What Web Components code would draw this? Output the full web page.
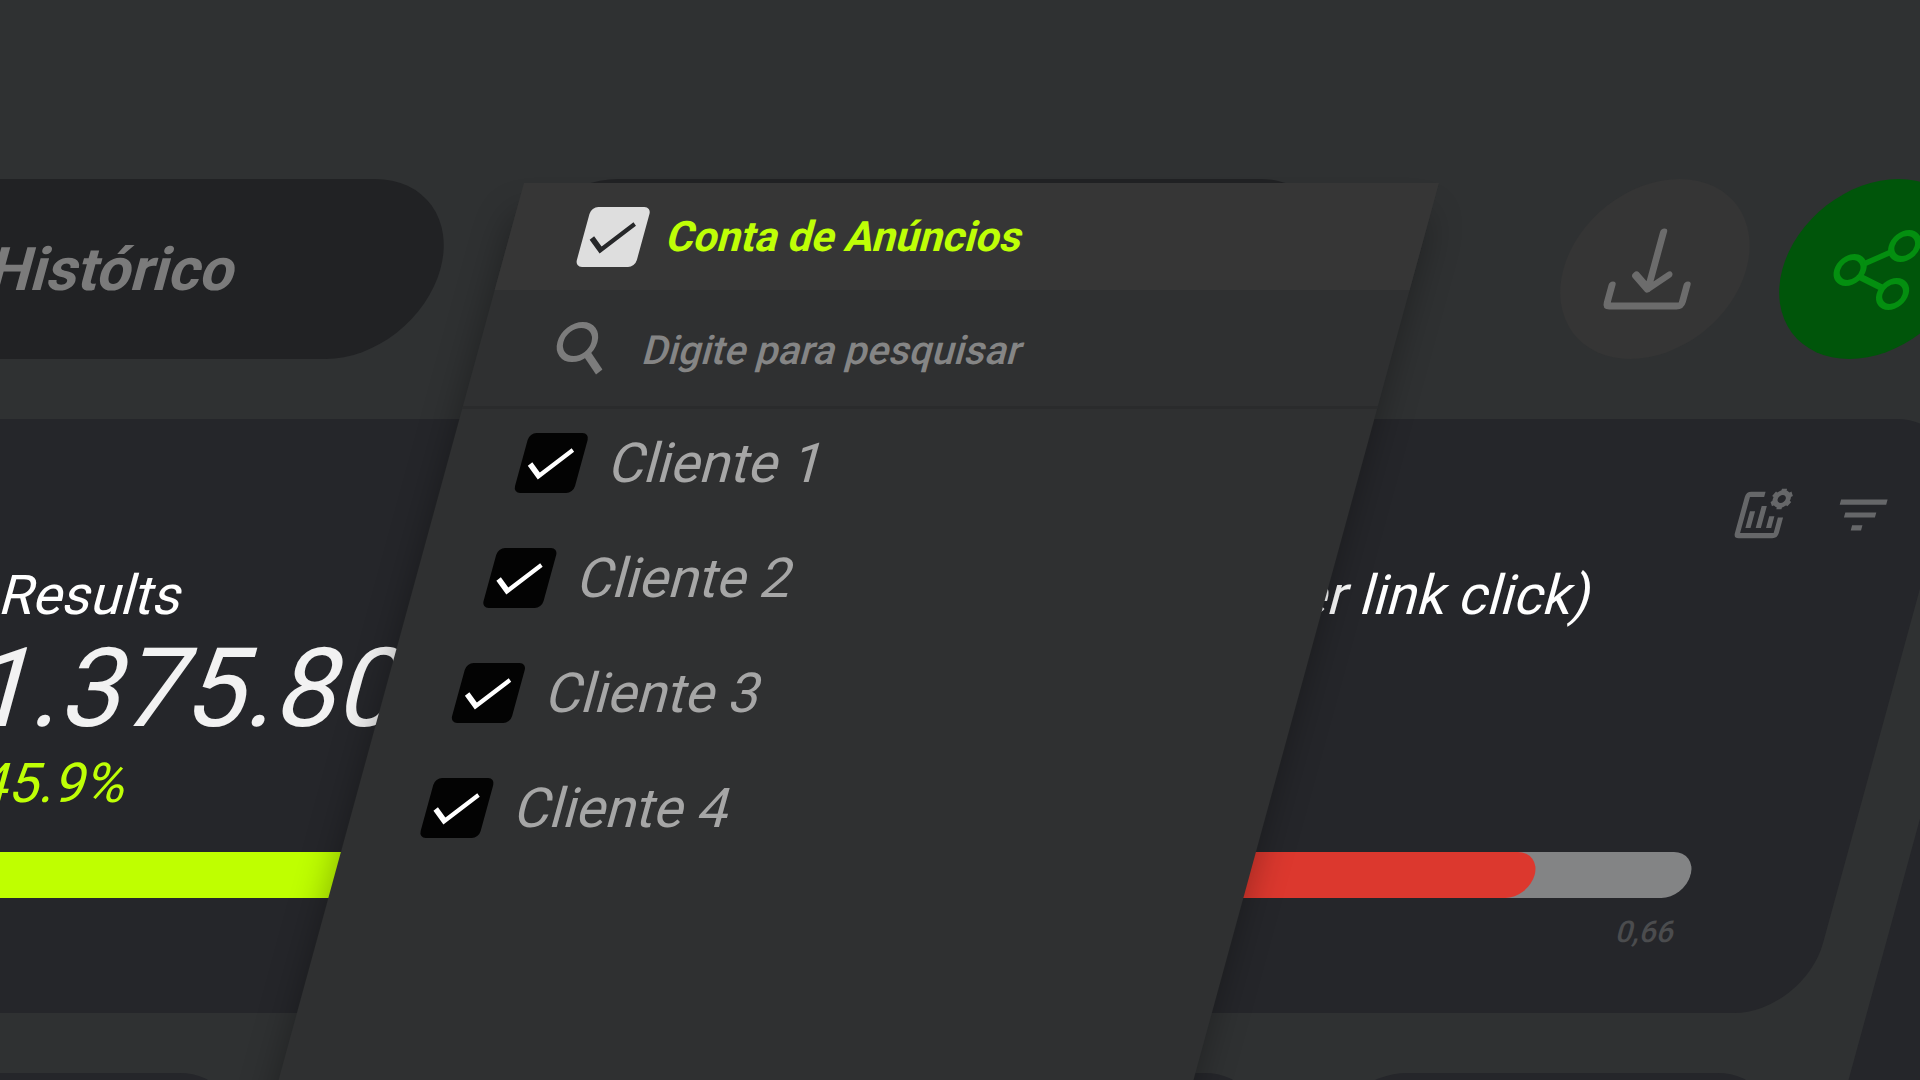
<!DOCTYPE html>
<html lang="pt-BR">
<head>
<meta charset="utf-8">
<title>Conta de Anúncios</title>
<style>
  html, body {
    margin: 0;
    height: 100%;
    overflow: hidden;
    background: #2f3132;
  }
</style>
</head>
<body>

<ads-stage>
  <report-toolbar slot="toolbar">
    <pill-button slot="history">Histórico</pill-button>
    <account-picker slot="account">
      <check-item slot="title" tone="light">Conta de Anúncios</check-item>
      <check-item>Cliente 1</check-item>
      <check-item>Cliente 2</check-item>
      <check-item>Cliente 3</check-item>
      <check-item>Cliente 4</check-item>
    </account-picker>
    <round-button slot="actions" label="Baixar">
      <svg viewBox="0 0 90 90" fill="none" stroke="currentColor" stroke-width="7" stroke-linecap="round" stroke-linejoin="round">
        <path d="M43 8V65M27 51L43 65L60 51"/>
        <path d="M6 61V78Q6 82 10 82H77Q81 82 81 78V61"/>
      </svg>
    </round-button>
    <round-button slot="actions" label="Compartilhar" tone="green">
      <svg viewBox="0 0 90 90" fill="none" stroke="currentColor" stroke-width="6">
        <circle cx="21" cy="46" r="13"/>
        <circle cx="69" cy="22" r="13"/>
        <circle cx="70" cy="70" r="13"/>
        <path d="M33 40L57 28M33 53L58 64"/>
      </svg>
    </round-button>
  </report-toolbar>

  <report-card>
    <metric-block value="1000">
      <span slot="name">Results</span>
      <span slot="total">1.375.80</span>
      <span slot="change">45.9%</span>
    </metric-block>
    <metric-block value="796" tone="red">
      <span slot="name">CPC (Cost per link click)</span>
      <span slot="limit">0,66</span>
    </metric-block>
  </report-card>
</ads-stage>

<script>
/* Base class: clones a style + markup string into an open shadow root. */
class BaseElement extends HTMLElement {
  constructor() {
    super();
    this.attachShadow({ mode: 'open' });
  }

  connectedCallback() {
    this.shadowRoot.innerHTML = this.template();
  }
}

/* Slanted canvas. Wider than the window so that the skew never bares an edge. */
class AdsStage extends BaseElement {
  template() {
    return `
      <style>
        :host {
          display: block;
          height: 100vh;
          overflow: hidden;
          font-family: Roboto, "Liberation Sans", sans-serif;
          color: #fff;
        }
        .plane {
          box-sizing: border-box;
          display: flex;
          flex-direction: column;
          gap: 60px;
          width: calc(100vw + 296px);
          padding-top: 179px;
          transform: skewX(-15.3deg);
          transform-origin: 0 0;
        }
        .board {
          display: grid;
          grid-template-columns: minmax(0, 1fr) 72px;
          gap: 63px;
        }
        .main {
          display: grid;
          gap: 60px;
        }
        .row {
          display: grid;
          grid-template-columns: 544fr 450fr 450fr 450fr;
          gap: 63px;
        }
        .tile {
          height: 300px;
          border-radius: 70px;
          background: #25262a;
        }
        .side {
          border-radius: 70px 0 0 70px;
          background: #25262a;
        }
      </style>
      <div class="plane">
        <slot name="toolbar"></slot>
        <div class="board">
          <div class="main">
            <slot></slot>
            <div class="row">
              <div class="tile"></div>
              <div class="tile"></div>
              <div class="tile"></div>
              <div class="tile"></div>
            </div>
          </div>
          <div class="side"></div>
        </div>
      </div>
    `;
  }
}

class ReportToolbar extends BaseElement {
  template() {
    return `
      <style>
        :host {
          position: relative;
          z-index: 1;
          display: flex;
          gap: 63px;
          height: 180px;
          margin-left: -130px;
          padding-right: 177px;
        }
        .history { flex: 644 1 0; display: grid; }
        .account { flex: 822 1 0; display: grid; }
        .actions {
          flex: 577 1 0;
          display: flex;
          justify-content: flex-end;
          gap: 36px;
        }
      </style>
      <div class="history"><slot name="history"></slot></div>
      <div class="account"><slot name="account"></slot></div>
      <div class="actions"><slot name="actions"></slot></div>
    `;
  }
}

class PillButton extends BaseElement {
  template() {
    return `
      <style>
        :host { display: grid; }
        button {
          padding: 0 8px 0 0;
          border: 0;
          border-radius: 90px;
          background: #212224;
          color: #7b7b7b;
          font: 700 60px Roboto, sans-serif;
        }
      </style>
      <button type="button"><slot></slot></button>
    `;
  }
}

class RoundButton extends BaseElement {
  template() {
    return `
      <style>
        :host { display: grid; width: 183px; }
        button {
          display: grid;
          place-items: center;
          padding: 0;
          border: 0;
          border-radius: 50%;
          background: #353535;
          color: #6c6c6c;
        }
        :host([tone="green"]) button { background: #00550a; color: #048f10; }
        ::slotted(svg) { width: 90px; height: 90px; }
      </style>
      <button type="button" aria-label="${this.getAttribute('label')}"><slot></slot></button>
    `;
  }
}

/* Pill with its drop-down panel lying open over the board. */
class AccountPicker extends BaseElement {
  template() {
    return `
      <style>
        :host {
          position: relative;
          display: block;
          border-radius: 90px;
          background: #212224;
        }
        .panel {
          position: absolute;
          top: 4px;
          left: -3px;
          width: calc(100% + 93px);
          height: 1100px;
          background: #2f3031;
          box-shadow: 0 32px 36px rgba(0, 0, 0, 0.32);
        }
        header {
          display: flex;
          align-items: center;
          height: 107px;
          padding-left: 74px;
          background: #363636;
        }
        .search {
          display: flex;
          align-items: center;
          gap: 36px;
          height: 116px;
          padding-left: 76px;
          border-bottom: 3px solid #2a2b2c;
          color: #7c7c7c;
        }
        .search svg { width: 54px; height: 54px; }
        input {
          flex: 1;
          min-width: 0;
          padding: 4px 0 0;
          border: 0;
          outline: 0;
          background: none;
          color: inherit;
          font: 500 40px Roboto, sans-serif;
        }
        input::placeholder { color: #858585; opacity: 1; }
        .list {
          display: grid;
          gap: 55px;
          padding: 24px 0 0 74px;
        }
      </style>
      <div class="panel">
        <header><slot name="title"></slot></header>
        <label class="search">
          <svg viewBox="0 0 54 54" fill="none" stroke="currentColor">
            <circle cx="21" cy="21" r="17" stroke-width="6"/>
            <path d="M33 32L51 51" stroke-width="7"/>
          </svg>
          <input type="text" aria-label="Digite para pesquisar" placeholder="Digite para pesquisar">
        </label>
        <div class="list"><slot></slot></div>
      </div>
    `;
  }
}

class CheckItem extends BaseElement {
  template() {
    return `
      <style>
        :host {
          display: block;
          font-size: 55px;
          line-height: 60px;
          color: #a6a6a6;
          --box: #030303;
          --mark: #fff;
          --gap: 30px;
        }
        :host([tone="light"]) {
          font-size: 42px;
          font-weight: 700;
          color: #bfff06;
          --box: #dedede;
          --mark: #262729;
          --gap: 25px;
        }
        label {
          display: flex;
          align-items: center;
          gap: var(--gap);
        }
        .box { display: grid; }
        .box > * { grid-area: 1 / 1; }
        input {
          appearance: none;
          width: 60px;
          height: 60px;
          margin: 0;
          border-radius: 7px;
          background: var(--box);
        }
        svg {
          width: 60px;
          height: 60px;
          pointer-events: none;
        }
        input:not(:checked) + svg { visibility: hidden; }
      </style>
      <label>
        <span class="box">
          <input type="checkbox" checked>
          <svg viewBox="0 0 60 60" fill="none" stroke="var(--mark)" stroke-width="5">
            <path d="M9 31L21 43L48 17"/>
          </svg>
        </span>
        <slot></slot>
      </label>
    `;
  }
}

class ReportCard extends BaseElement {
  template() {
    return `
      <style>
        :host {
          display: block;
          padding: 65px 49px 63px 165px;
          border-radius: 0 70px 70px 0;
          background: #25262a;
        }
        .tools {
          display: flex;
          justify-content: flex-end;
          gap: 35px;
        }
        button {
          display: block;
          padding: 0;
          border: 0;
          background: none;
          color: #666769;
        }
        svg { display: block; width: 62px; height: 62px; }
        .metrics {
          display: grid;
          grid-template-columns: 1fr 1fr;
          gap: 240px;
          margin-top: 14px;
          padding-right: 102px;
        }
      </style>
      <div class="tools">
        <button type="button" aria-label="Configurar gráfico">
          <svg viewBox="0 0 24 24" fill="none" stroke="currentColor" stroke-width="2">
            <path d="M10.500 4H5Q4 4 4 5V19Q4 20 5 20H18Q19 20 19 19V13"/>
            <path d="M7.500 10.500V17M11.500 8.500V17M15.500 12.500V17"/>
            <circle cx="17.500" cy="5.800" r="2.500" stroke-width="1.900"/>
            <path d="M17.500 3.500V1.800M17.500 8.100V9.800M19.500 4.700L21 3.800M19.500 6.900L21 7.800M15.500 4.700L14 3.800M15.500 6.900L14 7.800" stroke-width="2"/>
          </svg>
        </button>
        <button type="button" aria-label="Filtrar">
          <svg viewBox="0 0 24 24" fill="currentColor">
            <path d="M3 6H21V8H3ZM6 11H18V13H6ZM10 16H14V18H10Z"/>
          </svg>
        </button>
      </div>
      <div class="metrics"><slot></slot></div>
    `;
  }
}

class MetricBlock extends BaseElement {
  template() {
    return `
      <style>
        :host {
          display: block;
          min-width: 0;
          white-space: nowrap;
          --bar: #bfff00;
        }
        :host([tone="red"]) { --bar: #dc382e; }
        .name { height: 70px; font-size: 55px; line-height: 70px; }
        .total { height: 118px; font-size: 110px; line-height: 118px; color: #f2f2f2; }
        .change {
          height: 70px;
          padding-left: 30px;
          font-size: 55px;
          line-height: 70px;
          color: #bfff06;
        }
        progress {
          appearance: none;
          display: block;
          width: 100%;
          height: 46px;
          margin: 34px 0 16px;
          border: 0;
          border-radius: 23px;
          overflow: hidden;
          background: #838485;
        }
        progress::-webkit-progress-bar { background: #838485; }
        progress::-webkit-progress-value {
          border-radius: 0 23px 23px 0;
          background: var(--bar);
        }
        .limit {
          height: 36px;
          font-size: 30px;
          font-weight: 500;
          line-height: 36px;
          text-align: right;
          color: #4b4c4e;
        }
      </style>
      <div class="name"><slot name="name"></slot></div>
      <div class="total"><slot name="total"></slot></div>
      <div class="change"><slot name="change"></slot></div>
      <progress max="1000" value="${this.getAttribute('value')}" aria-label="Meta"></progress>
      <div class="limit"><slot name="limit"></slot></div>
    `;
  }
}

customElements.define('ads-stage', AdsStage);
customElements.define('report-toolbar', ReportToolbar);
customElements.define('pill-button', PillButton);
customElements.define('round-button', RoundButton);
customElements.define('account-picker', AccountPicker);
customElements.define('check-item', CheckItem);
customElements.define('report-card', ReportCard);
customElements.define('metric-block', MetricBlock);
</script>
</body>
</html>
